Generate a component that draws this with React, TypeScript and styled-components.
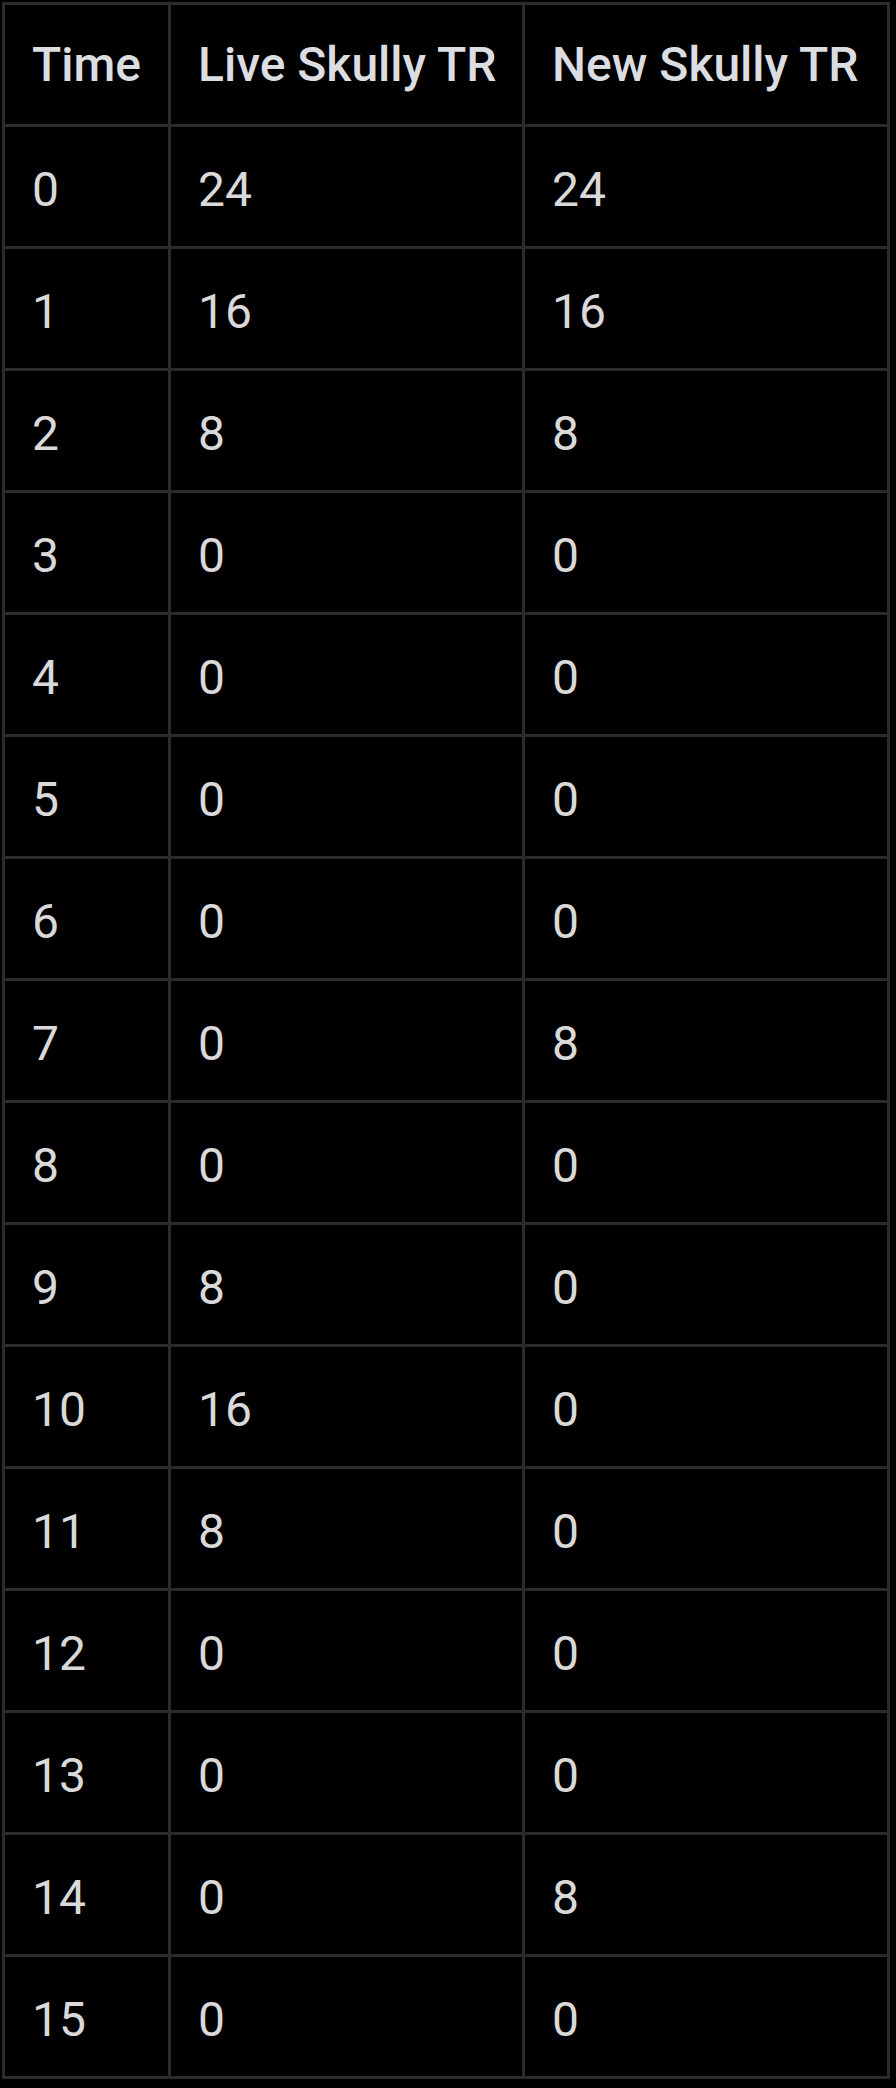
import React from "react";
import styled, { createGlobalStyle } from "styled-components";

const GlobalStyle = createGlobalStyle`
  html, body {
    margin: 0;
    padding: 0;
    background: #000;
  }
  body {
    font-family: Roboto, "Liberation Sans", sans-serif;
  }
`;

const Page = styled.div`
  padding: 2px 0 0 2px;
  background: #000;
  min-height: 2088px;
  box-sizing: border-box;
`;

const Table = styled.table`
  border-collapse: collapse;
  table-layout: fixed;
  width: 888px;
  border: 3px solid #2b2b2b;
`;

const Col = styled.col<{ $w: number }>`
  width: ${(p) => p.$w}px;
`;

const HeadCell = styled.th`
  height: 122px;
  padding: 0 0 0 27px;
  border: 3px solid #2b2b2b;
  text-align: left;
  vertical-align: middle;
  font-size: 48px;
  font-weight: 500;
  color: #dcdde0;
  white-space: nowrap;
  box-sizing: border-box;
`;

const Cell = styled.td`
  height: 122px;
  padding: 6px 0 0 27px;
  border: 3px solid #2b2b2b;
  vertical-align: middle;
  font-size: 48px;
  font-weight: 400;
  color: #d9d9d9;
  box-sizing: border-box;
`;

const rows: [number, number, number][] = [
  [0, 24, 24],
  [1, 16, 16],
  [2, 8, 8],
  [3, 0, 0],
  [4, 0, 0],
  [5, 0, 0],
  [6, 0, 0],
  [7, 0, 8],
  [8, 0, 0],
  [9, 8, 0],
  [10, 16, 0],
  [11, 8, 0],
  [12, 0, 0],
  [13, 0, 0],
  [14, 0, 8],
  [15, 0, 0],
];

export default function App() {
  return (
    <>
      <GlobalStyle />
      <Page>
        <Table>
          <colgroup>
            <Col $w={166} />
            <Col $w={354} />
            <Col $w={365} />
          </colgroup>
          <thead>
            <tr>
              <HeadCell>Time</HeadCell>
              <HeadCell>Live Skully TR</HeadCell>
              <HeadCell>New Skully TR</HeadCell>
            </tr>
          </thead>
          <tbody>
            {rows.map(([t, live, next]) => (
              <tr key={t}>
                <Cell>{t}</Cell>
                <Cell>{live}</Cell>
                <Cell>{next}</Cell>
              </tr>
            ))}
          </tbody>
        </Table>
      </Page>
    </>
  );
}
